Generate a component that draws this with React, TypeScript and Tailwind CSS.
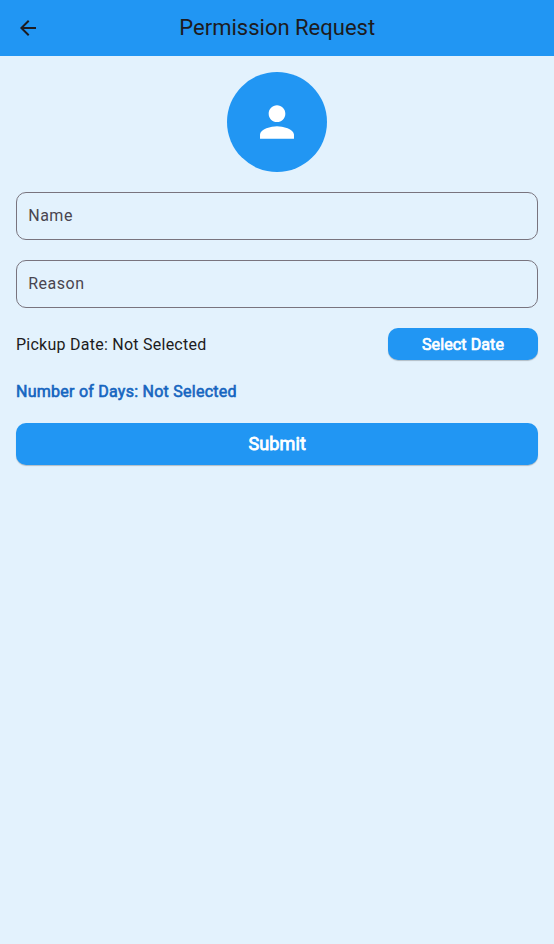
function Field({ label }: { label: string }) {
  return (
    <div className="flex h-12 items-center rounded-[10px] border border-[#79747e] pr-[11px] pb-px pl-[11.25px] text-base tracking-[0.5px] text-[#49454f]">
      {label}
    </div>
  );
}

export default function App() {
  return (
    <div className="min-h-screen bg-[#e3f2fd] font-['Roboto',sans-serif] text-[#1d1b20]">
      <header className="grid h-14 grid-cols-[56px_1fr_56px] items-center bg-[#2196f3]">
        <svg className="h-6 w-6 justify-self-center" viewBox="0 0 24 24" fill="currentColor">
          <path d="M20 11H7.83l5.59-5.59L12 4l-8 8 8 8 1.41-1.41L7.83 13H20v-2z" />
        </svg>
        <h1 className="pl-[0.5px] text-center text-[22px] leading-7">Permission Request</h1>
      </header>
      <main className="flex flex-col px-4 pt-4">
        <div className="flex h-[100px] w-[100px] items-center justify-center self-center rounded-full bg-[#2196f3]">
          <svg className="h-[50px] w-[50px]" viewBox="0 0 24 24" fill="white">
            <path d="M12 12c2.21 0 4-1.79 4-4s-1.79-4-4-4-4 1.79-4 4 1.79 4 4 4zm0 2c-2.67 0-8.15 1.34-8.15 4v2h16.3v-2c0-2.66-5.48-4-8.15-4z" />
          </svg>
        </div>
        <div className="mt-5 flex flex-col gap-5">
          <Field label="Name" />
          <Field label="Reason" />
        </div>
        <div className="mt-5 flex h-8 items-center justify-between">
          <span className="pt-px text-base tracking-[0.25px]">Pickup Date: Not Selected</span>
          <button className="h-8 w-[150px] rounded-[10px] bg-[#2196f3] pt-px text-base tracking-[0.1px] text-white shadow-[0_1px_1px_rgba(0,0,0,0.22)] [-webkit-text-stroke:0.7px_white]">Select Date</button>
        </div>
        <p className="mt-5 text-base leading-6 tracking-[0.25px] text-[#1565c0] [-webkit-text-stroke:0.6px_#1565c0]">Number of Days: Not Selected</p>
        <button className="mt-[19px] h-[42px] rounded-[10px] bg-[#2196f3] pl-[6.5px] text-lg tracking-[0.1px] text-white shadow-[0_1px_1px_rgba(0,0,0,0.22)] [-webkit-text-stroke:0.8px_white] pr-[6px]">Submit</button>
      </main>
    </div>
  );
}
